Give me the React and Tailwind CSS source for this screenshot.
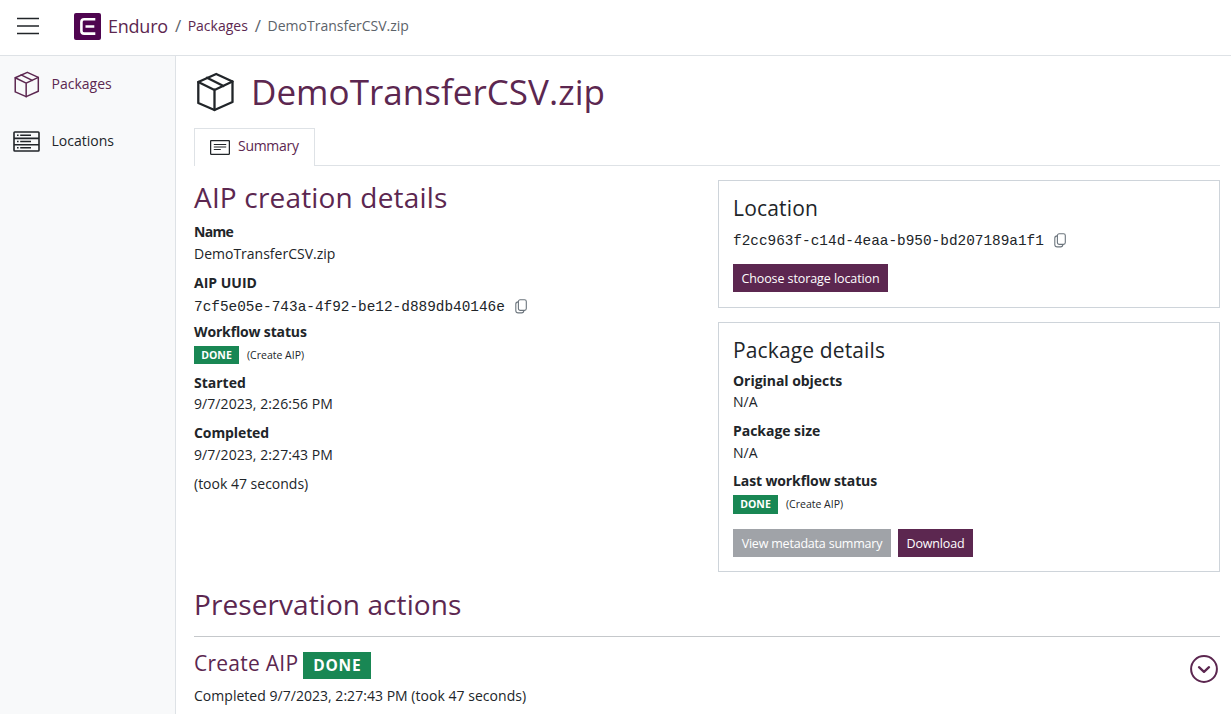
function BoxIcon({ className, strokeWidth }) {
  return (
    <svg viewBox="0 0 38 40" className={className} fill="none" stroke="currentColor" strokeWidth={strokeWidth} strokeLinejoin="round" strokeLinecap="round">
      <path d="M2.3 10 20.2 2 36.5 9.5V30L18.5 38 2.3 31Z" />
      <path d="M2.3 10 18.5 18 36.5 9.5M18.5 18V38M11 5.8 27.5 14" />
    </svg>
  );
}

function ServersIcon() {
  return (
    <svg viewBox="0 0 27 21" className="h-[21px] w-[27px] shrink-0" fill="none" stroke="currentColor" strokeWidth="1.6">
      <rect x="1" y="1" width="25" height="19" rx="0.8" />
      <path d="M1 7.4H26M1 13.7H26" />
      <path d="M4 4.2H5.6M7.2 4.2H18M4 10.5H5.6M7.2 10.5H18M4 16.8H5.6M7.2 16.8H18" strokeWidth="1.5" />
    </svg>
  );
}

function SummaryIcon() {
  return (
    <svg viewBox="0 0 20 15" className="h-[15px] w-5 shrink-0 text-[#212529]" fill="none" stroke="currentColor" strokeWidth="1.3">
      <rect x="0.6" y="0.6" width="18.8" height="13.8" rx="0.8" />
      <path d="M3.8 4.5H16.2M3.8 7H16.2M3.8 9.5H10.8" strokeWidth="1.2" />
    </svg>
  );
}

function CopyIcon() {
  return (
    <svg viewBox="0 0 12 15" className="h-[15px] w-3 shrink-0 text-[#6c757d]" fill="none" stroke="currentColor" strokeWidth="1.1" strokeLinejoin="round">
      <rect x="3.4" y="0.8" width="7.9" height="10.6" rx="1.8" />
      <path d="M3.4 2.9C1.6 3 0.8 3.6 0.8 4.9V11.4C0.8 13.1 1.7 13.9 3.3 13.9H6.6C7.9 13.9 8.8 13.2 8.9 11.4" />
    </svg>
  );
}

function Badge({ className = "" }) {
  return (
    <span className={`flex items-center justify-center bg-[#198754] font-bold text-white ${className}`}>DONE</span>
  );
}

const button = "flex h-7 items-center justify-center pt-px text-[12.5px] text-white";

export default function App() {
  return (
    <div className="flex h-[714px] w-full flex-col overflow-hidden bg-white font-['Open_Sans','Noto_Sans',sans-serif] text-[14px] leading-[22px] text-[#212529]">
      <header className="flex h-14 shrink-0 items-center border-b border-[#dee2e6] pb-[3px] pl-[17px]">
        <svg viewBox="0 0 22 18" className="h-[18px] w-[22px]" stroke="#212529" strokeWidth="1.5">
          <path d="M0 1.5H22M0 9H22M0 16.5H22" />
        </svg>
        <svg viewBox="0 0 27 27" className="ml-[35px] h-[27px] w-[27px]">
          <rect width="27" height="27" rx="2" fill="#4f0550" />
          <path d="M21.3 6.3H10.2Q7.4 6.3 7.4 9V18Q7.4 20.6 10.2 20.6H21.3M11.5 13.5H20.3" fill="none" stroke="#fff" strokeWidth="2.6" />
        </svg>
        <nav className="flex items-center whitespace-nowrap text-[#5c2750]">
          <a className="ml-[7px] text-[18px] tracking-[-0.23px]">Enduro</a>
          <span className="ml-[7px] text-[17px] text-[#5c636a]">/</span>
          <a className="ml-[6.5px]">Packages</a>
          <span className="ml-[7px] text-[17px] text-[#5c636a]">/</span>
          <span className="ml-[6.5px] text-[#5c636a]">DemoTransferCSV.zip</span>
        </nav>
      </header>

      <div className="flex min-h-0 flex-1">
        <aside className="flex w-44 shrink-0 flex-col border-r border-[#dee2e6] bg-[#f8f9fa]">
          <a className="flex h-[57px] items-center pl-[13px] text-[#5c2750]">
            <BoxIcon className="h-[27px] w-[27px] shrink-0" strokeWidth="2.2" />
            <span className="ml-[11.5px] pb-[2px]">Packages</span>
          </a>
          <a className="flex h-[57px] items-center pl-[13px]">
            <ServersIcon />
            <span className="ml-[11.5px] pb-[2px]">Locations</span>
          </a>
        </aside>

        <main className="flex min-w-0 flex-1 flex-col pl-[18px] pr-[11px] pt-[13px]">
          <div className="flex h-11 shrink-0 items-center">
            <BoxIcon className="ml-[2px] mt-px h-10 w-[38px] shrink-0" strokeWidth="2.3" />
            <h1 className="ml-[17px] pt-[2px] text-[35px] leading-[44px] tracking-[0.03px] text-[#5c2750]">DemoTransferCSV.zip</h1>
          </div>

          <div className="mt-[15px] flex h-[38px] shrink-0">
            <div className="flex w-[121px] items-center border-x border-t border-[#dee2e6] pl-[15px] text-[#5c2750]">
              <SummaryIcon />
              <span className="ml-2 pb-1 tracking-[-0.3px]">Summary</span>
            </div>
            <div className="flex-1 border-b border-[#dee2e6]" />
          </div>

          <div className="mt-[14px] flex h-[392px] shrink-0">
            <section className="flex w-[524px] shrink-0 flex-col">
              <h2 className="text-[28px] leading-[34px] tracking-[0.17px] text-[#5c2750]">AIP creation details</h2>
              <div className="mt-[7px] font-bold tracking-[-0.7px]">Name</div>
              <div>DemoTransferCSV.zip</div>
              <div className="mt-[7px] font-bold">AIP UUID</div>
              <div className="mt-[2px] flex items-center">
                <span className="font-['Liberation_Mono',monospace] text-[14.4px]">7cf5e05e-743a-4f92-be12-d889db40146e</span>
                <span className="mb-px ml-[10px]"><CopyIcon /></span>
              </div>
              <div className="mt-[3px] font-bold tracking-[-0.15px]">Workflow status</div>
              <div className="mt-[3px] flex h-[18px] items-center text-[10.5px]">
                <Badge className="h-[18px] w-[45px]" />
                <span className="ml-2">(Create AIP)</span>
              </div>
              <div className="mt-2 font-bold leading-[21px]">Started</div>
              <div className="tracking-[0.07px]">9/7/2023, 2:26:56 PM</div>
              <div className="mt-[7px] font-bold tracking-[-0.1px]">Completed</div>
              <div className="tracking-[0.07px]">9/7/2023, 2:27:43 PM</div>
              <div className="mt-[7px]">(took 47 seconds)</div>
            </section>

            <div className="flex flex-1 flex-col gap-[14px]">
              <section className="flex h-32 flex-col items-start border border-[#ced4da] px-[14px] pt-[14px]">
                <h3 className="text-[21px] leading-[26px] tracking-[0.18px]">Location</h3>
                <div className="mt-[9px] flex items-center">
                  <span className="font-['Liberation_Mono',monospace] text-[14.4px]">f2cc963f-c14d-4eaa-b950-bd207189a1f1</span>
                  <span className="mb-px ml-[10px]"><CopyIcon /></span>
                </div>
                <button className={`${button} mt-[12px] w-[155px] bg-[#5c2750] tracking-[-0.09px]`}>Choose storage location</button>
              </section>

              <section className="flex h-[250px] flex-col border border-[#ced4da] px-[14px] pt-[14px]">
                <h3 className="text-[21px] leading-[26px] tracking-[0.13px]">Package details</h3>
                <div className="mt-[7px] font-bold leading-[21px] tracking-[-0.04px]">Original objects</div>
                <div>N/A</div>
                <div className="mt-[7px] font-bold tracking-[-0.04px]">Package size</div>
                <div>N/A</div>
                <div className="mt-[6px] font-bold tracking-[-0.12px]">Last workflow status</div>
                <div className="mt-[3px] flex h-[19px] items-center text-[10.5px]">
                  <Badge className="h-[19px] w-[45px] pb-px" />
                  <span className="ml-2 pb-px">(Create AIP)</span>
                </div>
                <div className="mt-[15px] flex gap-[7px]">
                  <button className={`${button} w-[158px] bg-[#a0a3a8] tracking-[-0.2px]`}>View metadata summary</button>
                  <button className={`${button} w-[75px] bg-[#5c2750] tracking-[-0.15px]`}>Download</button>
                </div>
              </section>
            </div>
          </div>

          <h2 className="mt-[15px] text-[28px] leading-[34px] tracking-[0.08px] text-[#5c2750]">Preservation actions</h2>
          <div className="mt-[15px] border-t border-[#c5c8cb]" />
          <div className="mt-[13px] flex items-start justify-between">
            <div className="flex flex-col">
              <div className="flex items-center">
                <h3 className="pb-[5px] text-[21px] leading-[26px] tracking-[0.25px] text-[#5c2750]">Create AIP</h3>
                <Badge className="ml-[5px] h-[27px] w-[68px] pb-px text-[15.5px] tracking-[0.8px]" />
              </div>
              <div className="mt-1 tracking-[0.03px]">Completed 9/7/2023, 2:27:43 PM (took 47 seconds)</div>
            </div>
            <svg viewBox="0 0 28 28" className="mr-[2px] mt-[5px] h-7 w-7 text-[#5c2750]" fill="none" stroke="currentColor" strokeWidth="2" strokeLinecap="round" strokeLinejoin="round">
              <circle cx="14" cy="14" r="12.9" />
              <path d="M9 12.2 14 16.8 19 12.2" strokeWidth="2.3" />
            </svg>
          </div>
        </main>
      </div>
    </div>
  );
}
